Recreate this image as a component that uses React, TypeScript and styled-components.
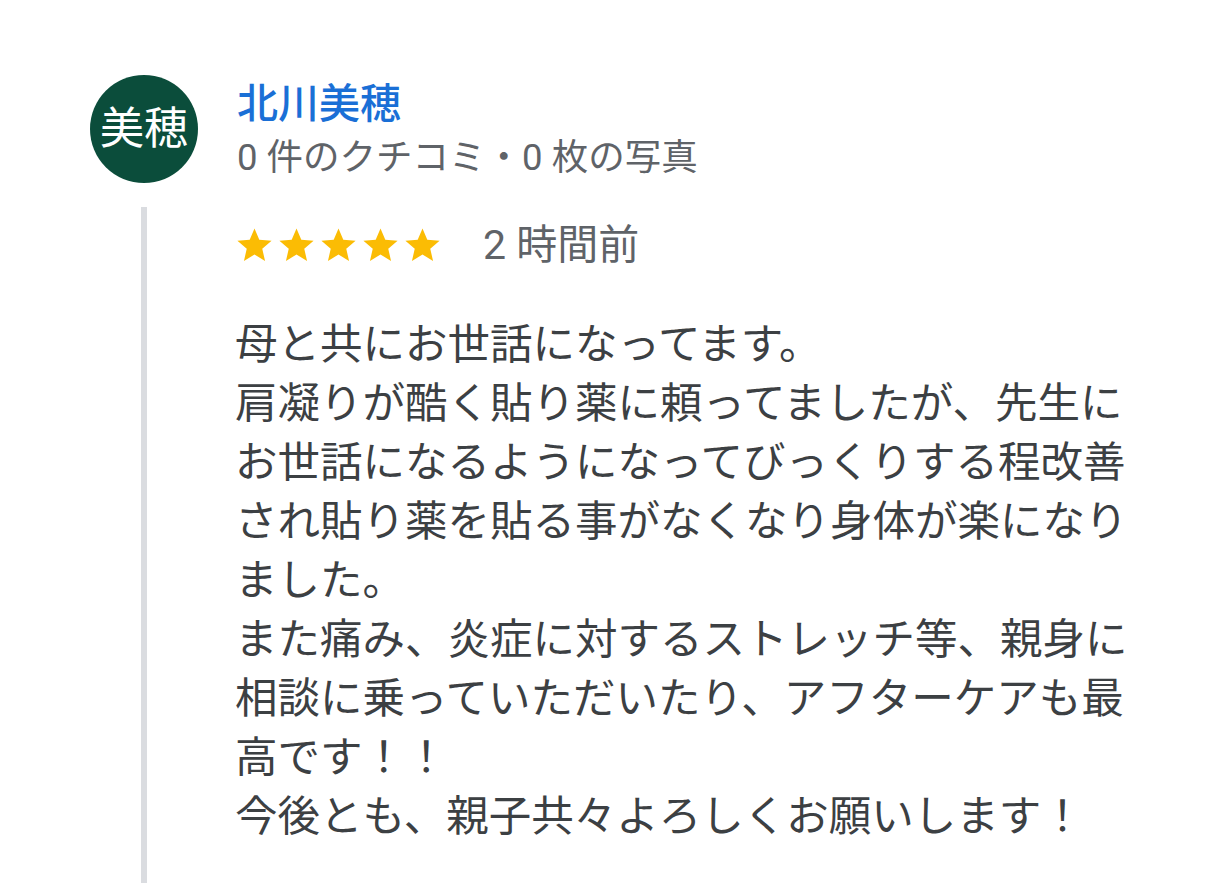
import React from "react";
import styled, { createGlobalStyle } from "styled-components";

const GlobalStyle = createGlobalStyle`
  html, body {
    margin: 0;
    padding: 0;
    background: #ffffff;
  }
  body {
    font-family: Roboto, "Noto Sans CJK JP", "Noto Sans", sans-serif;
    -webkit-font-smoothing: antialiased;
  }
`;

const Page = styled.div`
  display: flex;
  flex-direction: column;
  height: 100vh;
  padding: 75px 0 0 90px;
  box-sizing: border-box;
  overflow: hidden;
`;

const Header = styled.header`
  display: flex;
  align-items: flex-start;
  gap: 39px;
`;

const Avatar = styled.div`
  width: 108px;
  height: 108px;
  border-radius: 50%;
  background: #0b4d3b;
  color: #ffffff;
  font-size: 44px;
  line-height: 1;
  display: grid;
  place-items: center;
  flex-shrink: 0;
`;

const Meta = styled.div`
  display: flex;
  flex-direction: column;
  padding-top: 4px;
`;

const Name = styled.div`
  color: #1a6fd6;
  font-size: 41px;
  font-weight: 500;
  line-height: 50px;
`;

const Sub = styled.div`
  color: #5f6368;
  font-size: 36.5px;
  line-height: 50px;
  margin-top: 4px;
`;

const Thread = styled.section`
  flex: 1;
  margin: 24px 0 0 51px;
  border-left: 6px solid #dadce0;
  padding: 20px 0 0 90px;
`;

const RatingRow = styled.div`
  display: flex;
  align-items: center;
  height: 36px;
`;

const Stars = styled.div`
  display: flex;
  gap: 1px;
  margin-left: -3px;
`;

const Star = styled.svg`
  width: 41px;
  height: 41px;
  fill: #fbbc04;
  display: block;
`;

const Time = styled.span`
  margin-left: 40px;
  color: #5f6368;
  font-size: 41px;
  line-height: 36px;
`;

const Body = styled.p`
  margin: 52px 0 0 -2px;
  max-width: 900px;
  color: #3c4043;
  font-size: 42.5px;
  line-height: 59px;
  white-space: pre-line;
`;

const text =
  "母と共にお世話になってます。\n肩凝りが酷く貼り薬に頼ってましたが、先生にお世話になるようになってびっくりする程改善され貼り薬を貼る事がなくなり身体が楽になりました。\nまた痛み、炎症に対するストレッチ等、親身に相談に乗っていただいたり、アフターケアも最高です！！\n今後とも、親子共々よろしくお願いします！";

const StarIcon = () => (
  <Star viewBox="0 0 24 24" aria-hidden="true">
    <path d="M12 17.27L18.18 21l-1.64-7.03L22 9.24l-7.19-.61L12 2 9.19 8.63 2 9.24l5.46 4.73L5.82 21z" />
  </Star>
);

export default function App() {
  return (
    <>
      <GlobalStyle />
      <Page>
        <Header>
          <Avatar>美穂</Avatar>
          <Meta>
            <Name>北川美穂</Name>
            <Sub>0 件のクチコミ・0 枚の写真</Sub>
          </Meta>
        </Header>
        <Thread>
          <RatingRow>
            <Stars>
              {[0, 1, 2, 3, 4].map((i) => (
                <StarIcon key={i} />
              ))}
            </Stars>
            <Time>2 時間前</Time>
          </RatingRow>
          <Body>{text}</Body>
        </Thread>
      </Page>
    </>
  );
}
